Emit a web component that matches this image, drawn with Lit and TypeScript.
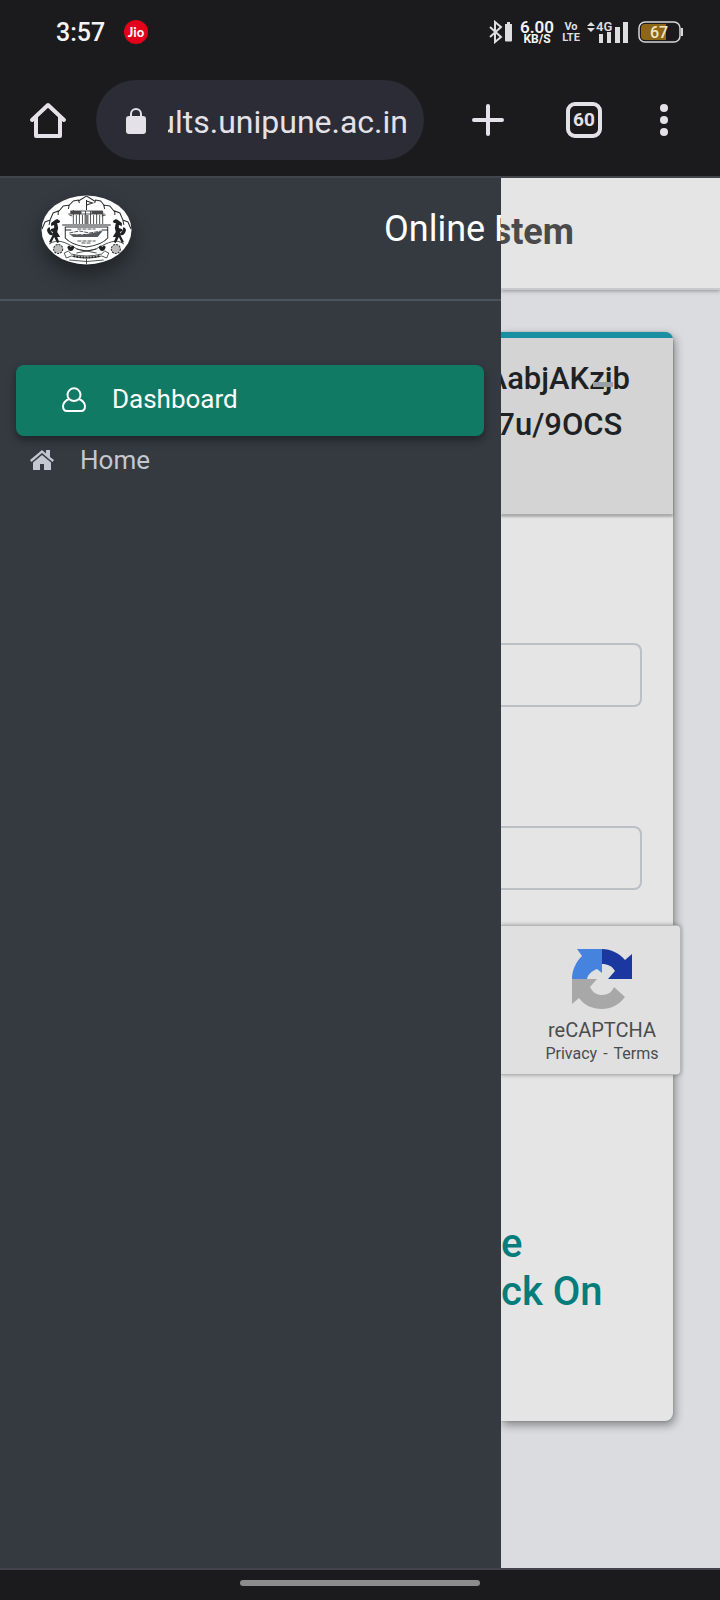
import { LitElement, html, css, svg } from "lit";
import { customElement } from "lit/decorators.js";

@customElement("status-bar")
class StatusBar extends LitElement {
  static styles = css`
    :host { display: flex; align-items: center; height: 64px; padding: 0 36px 0 56px; color: #f4f4f6; font-family: Roboto, sans-serif; }
    .time { font: 500 25px/32px Roboto, sans-serif; width: 68px; padding-top: 2px; white-space: nowrap; }
    .jio { width: 24px; height: 24px; border-radius: 50%; background: #e2001a; font: 900 13px/24px Lato, sans-serif; text-align: center; }
    .right { margin-left: auto; display: flex; align-items: center; height: 32px; }
    .bt { width: 24px; height: 24px; }
    .speed { display: grid; width: 34px; margin-left: 7px; text-align: center; font: 700 12px/11px Roboto, sans-serif; justify-content: center; }
    .speed .num { font: 600 17px/14px Roboto, sans-serif; }
    .volte { display: grid; width: 16px; margin-left: 9px; text-align: center; justify-content: center; font: 700 11px/11px Roboto, sans-serif; color: #dedee0; }
    .signal { width: 42px; height: 24px; margin-left: 8px; }
    .battery { width: 46px; height: 22px; margin-left: 9px; }
    svg text { font-family: Roboto, sans-serif; }
  `;
  render() {
    return html`
      <span class="time">3:57</span><span class="jio">Jio</span>
      <div class="right">
        <svg class="bt" viewBox="0 0 24 24"><path d="M1 7l11 10-6 5V2l6 5L1 17" fill="none" stroke="#dedee0" stroke-width="2"/><path d="M18 2h3v2h2v16.500q0 1-1 1h-5q-1 0-1-1V4h2z" fill="#dedee0"/></svg>
        <span class="speed"><span class="num">6.00</span><span>KB/S</span></span>
        <span class="volte"><span>Vo</span><span>LTE</span></span>
        <svg class="signal" viewBox="0 0 42 24">
          <path d="M0 6l4-4 4 4zM0 8l4 4 4-4z" fill="#dedee0"/>
          <path d="M12 14h4v9h-4zM20 12h4v11h-4zM28 7h5v16h-5zM36 2h5v21h-5z" fill="#dedee0"/>
          <text x="9" y="11" font-size="13" font-weight="600" fill="#dedee0" stroke="#1b1b1d" stroke-width="2" paint-order="stroke">4G</text>
        </svg>
        <svg class="battery" viewBox="0 0 46 22">
          <rect x="1" y="1" width="41" height="20" rx="6" fill="none" stroke="#d6d6d8" stroke-width="1.500"/>
          <path d="M7 3h21v16H7q-4 0-4-4V7q0-4 4-4z" fill="#8d6715"/>
          <path d="M44 7v8" stroke="#d6d6d8" stroke-width="2"/>
          <text x="21" y="17" font-size="16" font-weight="500" fill="#f1e5c8" text-anchor="middle">67</text>
        </svg>
      </div>`;
  }
}

@customElement("browser-bar")
class BrowserBar extends LitElement {
  static styles = css`
    :host { display: flex; align-items: center; padding: 16px 44px 16px 28px; color: #e4e2e8; font-family: Roboto, sans-serif; }
    button { border: 0; background: none; padding: 0; color: inherit; display: grid; place-items: center; flex: none; height: 40px; }
    .home { width: 40px; }
    .home svg { width: 40px; height: 40px; }
    .pill { flex: 1; min-width: 0; height: 80px; margin: 0 44px 0 28px; padding: 2px 16px 0 30px; border-radius: 40px; background: #2b2c35; display: flex; align-items: center; box-sizing: border-box; }
    .lock { width: 20px; height: 28px; flex: none; margin-right: 22px; }
    .url { flex: 1; min-width: 0; border: 0; padding: 2px 0 0; background: none; color: inherit; font: 400 32px/40px Roboto, sans-serif; direction: rtl; outline: 0; }
    .plus { width: 40px; }
    .tabs { width: 36px; height: 36px; border: 4px solid; border-radius: 9px; box-sizing: border-box; font: 700 19px/20px Roboto, sans-serif; margin-left: 58px; }
    .menu { width: 24px; margin-left: 50px; }
  `;
  render() {
    return html`
      <button class="home" aria-label="Home"><svg viewBox="0 0 40 40"><path d="M4 20L20 5l16 15M8 17v19h24V17" fill="none" stroke="currentColor" stroke-width="4" stroke-linejoin="round" stroke-linecap="round"/></svg></button>
      <div class="pill">
        <svg class="lock" viewBox="0 0 20 28"><path d="M5 11V7a5 5 0 0 1 10 0v4" fill="none" stroke="#e4e2e8" stroke-width="2"/><rect y="9" width="20" height="18" rx="3" fill="#e4e2e8"/></svg>
        <input class="url" aria-label="Address" value="results.unipune.ac.in">
      </div>
      <button class="plus" aria-label="New tab"><svg width="32" height="32" viewBox="0 0 32 32"><path d="M16 2v28M2 16h28" stroke="currentColor" stroke-width="4" stroke-linecap="round"/></svg></button>
      <button class="tabs" aria-label="Open tabs">60</button>
      <button class="menu" aria-label="Menu"><svg width="8" height="32" viewBox="0 0 8 32"><g fill="currentColor"><circle cx="4" cy="4" r="4"/><circle cx="4" cy="16" r="4"/><circle cx="4" cy="28" r="4"/></g></svg></button>`;
  }
}

const horse = svg`<path d="M14 25l2-1 3 2-1 2-2 0 1 5-1 4 3 5-3 0 2 5-2 1-3-6-3 6-2-1 3-6 1-4-3-1 1-2 3-1 0-3-3 1 0-3zM12 38q-3-1-3-4t-2-1q-2 2 0 5t4 2z" fill="#1e2022" stroke="none"/>`;

@customElement("side-drawer")
class SideDrawer extends LitElement {
  static styles = css`
    :host { display: block; background: #343a40; color: #fff; font-family: Roboto, sans-serif; overflow: hidden; }
    .brand { display: flex; align-items: flex-start; border-bottom: 2px solid #4b545c; padding: 17px 0 0 41px; box-sizing: border-box; height: 123px; }
    .logo { width: 91px; height: 70px; flex: none; margin-right: 252px; filter: drop-shadow(0 10px 10px rgba(0, 0, 0, 0.400)); }
    .name { font-size: 36px; line-height: 44px; margin-top: 12px; white-space: nowrap; }
    nav { padding: 64px 17px 0 16px; display: flex; flex-direction: column; }
    a { display: flex; align-items: center; color: #c2c7d0; text-decoration: none; font-size: 26px; line-height: 32px; gap: 25px; }
    a svg { width: 26px; height: 28px; }
    .dash { background: #117a65; color: #fff; height: 71px; border-radius: 8px; padding: 0 0 4px 45px; box-shadow: 0 4px 8px rgba(0, 0, 0, 0.400); box-sizing: border-box; }
    .homelink { padding: 8px 0 0 13px; }
  `;
  render() {
    return html`
      <div class="brand">
        <svg class="logo" viewBox="0 0 90 70" preserveAspectRatio="none" role="img" aria-label="University crest">
          <defs><clipPath id="oval"><ellipse cx="45" cy="35" rx="44.500" ry="34.500"/></clipPath></defs>
          <g clip-path="url(#oval)" fill="none" stroke="#282a2c" stroke-width="1">
            <path d="M0 0h90v70H0z" fill="#fff" stroke="none"/>
            <path d="M1 34l3-7 5-2-1 5M9 25l3-7 5-2 0 4M17 17l5-6 6-1-1 4M27 11l5-5 5-1 1 3M37 6l8-5 8 5M53 8l1-3 5 1 4 5M63 14l-1-4 6 1 5 6M73 20v-4l5 2 3 7M82 30l-1-5 5 2 3 7"/>
            <path d="M45 5v10M45 6l6 2-6 2"/>
            <path d="M29 16h32M27 19h36M32 15v14M35 20v9M38 16v13M41 20v9M44 16v13M49 16v13M52 20v9M55 16v13M58 20v9M61 16v13M28 20l3 1M60 21l4-1" stroke-width="0.800"/>
            <path d="M29 16h11v3H29zM50 16h11v3H50z" fill="#44484a" stroke="none"/>
            <path d="M21 30h48M24 32h42v11c-5 6-14 8-21 9-7-1-16-3-21-9zM24 35h6M60 35h6"/>
            <path d="M28 38l10-2 10 2 12-2M31 40l25-1M36 34h18M36 46h18M40 48h10" stroke-width="0.800" stroke-dasharray="4 1"/>
            <path d="M28 39l13 1 20-4-5 6H32z" fill="#55595b" stroke="none"/>
            <path d="M43 20h4v9h-4z" fill="#777" stroke="none"/>
            <path d="M8 49c9-6 17-1 24 3 8 5 18 5 26 0 8-4 16-9 24-3M35 54l20 4M55 54l-20 4" stroke-width="0.800"/>
            <circle cx="17" cy="54" r="4.500" fill="#bbb" stroke-dasharray="2 1"/><circle cx="74" cy="54" r="4.500" fill="#bbb" stroke-dasharray="2 1"/>
            <path d="M26 52q2-3 3.500 0 2-3 3.500 0-1 4-3.500 4t-3.500-4zM57 52q2-3 3.500 0 2-3 3.500 0-1 4-3.500 4t-3.500-4z" fill="#1e2022" stroke="none"/>
            <path d="M23 58l4-2 3 3q15 4 30 0l3-3 4 2-2 5-5-2q-15 4-30 0l-5 2zM45 64v6M28 65q17 3 34 0" stroke-width="0.800"/>
            <path d="M32 61q13 3 26 0" stroke-width="2" stroke-dasharray="2 1"/>
            ${horse}<g transform="translate(90 0) scale(-1 1)">${horse}</g>
          </g>
        </svg>
        <span class="name">Online R</span>
      </div>
      <nav>
        <a class="dash" href="#dashboard"><svg viewBox="0 0 26 28" fill="none" stroke="currentColor" stroke-width="2"><path d="M8 14a6.500 6.500 0 1 1 10 0c3 1 6 4 6 7 0 4-2 5-4 5H6c-2 0-4-1-4-5 0-3 3-6 6-7zM8 14q5 4 10 0"/></svg>Dashboard</a>
        <a class="homelink" href="#home"><svg viewBox="0 0 26 28" fill="currentColor"><path d="M1 14L13 4l4 3.500V4h4v7l4 3-1.500 2L13 7 2.500 16z"/><path d="M4 16.500l9-7.500 9 7.500V24h-7v-6h-4v6H4z"/></svg>Home</a>
      </nav>`;
  }
}

@customElement("result-page")
class ResultPage extends LitElement {
  static styles = css`
    :host { display: block; overflow: hidden; background: #dbdce0; color: #1f2225; font-family: Roboto, sans-serif; }
    .top { display: flex; justify-content: flex-end; height: 110px; padding: 32px 146px 0 0; box-sizing: border-box; background: #e5e5e5; box-shadow: 0 2px 0 #c8c9cc, 0 3px 4px rgba(0, 0, 0, 0.350); }
    h1 { margin: 0; font: 700 36px/44px Roboto, sans-serif; color: #4a4a4a; }
    .card { margin: 44px 47px 0 0; min-height: 1089px; box-sizing: border-box; border-top: 6px solid #1890a2; border-radius: 0 8px 8px 0; background: #e5e5e5; box-shadow: 0 0 2px rgba(0, 0, 0, 0.200), 2px 4px 10px rgba(0, 0, 0, 0.400); }
    .head { position: relative; height: 176px; padding: 18px 43px 0 0; box-sizing: border-box; background: #d4d4d4; box-shadow: 0 3px 2px rgba(0, 0, 0, 0.250); display: flex; flex-direction: column; align-items: flex-end; font-weight: 500; font-size: 31px; line-height: 46px; white-space: pre; }
    .fold { position: absolute; right: 60px; top: 44px; width: 20px; height: 5px; border: 0; padding: 0; background: #9aa0a8; }
    .fields { display: grid; gap: 119px; padding: 129px 31px 0 0; }
    input { width: 100%; height: 64px; box-sizing: border-box; border: 2px solid #bbbfc6; border-left: 0; border-radius: 0 8px 8px 0; background: transparent; padding: 0 20px; font: 400 28px/32px Roboto, sans-serif; outline: 0; }
    .captcha { position: relative; margin: 35px -8px 0 0; height: 150px; box-sizing: border-box; border: 1px solid #b7b7b9; border-left: 0; border-radius: 0 4px 4px 0; background: #e0e0e0; box-shadow: 0 0 4px rgba(0, 0, 0, 0.350); display: flex; flex-direction: column; align-items: center; padding: 22px 0 0 23px; color: #4c4c4c; }
    .captcha svg { width: 62px; height: 62px; }
    .label { font-size: 20px; line-height: 28px; margin-top: 6px; }
    .links { font-size: 16px; line-height: 20px; display: flex; gap: 6px; }
    .links a { color: inherit; text-decoration: none; }
    h2 { margin: 145px 0 0; font: 500 40px/48px Roboto, sans-serif; color: #047d7c; }
    h2 span { display: block; }
  `;
  render() {
    return html`
      <header class="top"><h1>stem</h1></header>
      <section class="card">
        <div class="head"><span>AabjAKzjb</span><span>7u/9OCS </span><button class="fold" aria-label="Collapse"></button></div>
        <div class="fields"><input type="text" aria-label="Seat number"><input type="text" aria-label="Mother name"></div>
        <div class="captcha">
          <svg viewBox="0 0 62 62">
            <path d="M1 31C1 22 5 14 11 8L6 1h25v24l-5-4c-5 2-9 5-10 10z" fill="#4583df"/>
            <path d="M31 1c9 0 17 4 23 11l7-6v25H37l7-8c-3-5-7-7-13-7z" fill="#1b38a0"/>
            <path d="M1 31h25l-7 8c3 6 7 8 12 8 6 0 10-3 12-8l11 10c-6 8-14 12-23 12-10 0-18-4-23-11l-7 6z" fill="#a8a8a8"/>
          </svg>
          <span class="label">reCAPTCHA</span>
          <span class="links"><a href="#privacy">Privacy</a><span>-</span><a href="#terms">Terms</a></span>
        </div>
        <h2><span>e</span><span>ck On</span></h2>
      </section>`;
  }
}

@customElement("app-root")
class AppRoot extends LitElement {
  static styles = css`
    :host { display: flex; flex-direction: column; min-height: 100vh; background: #1b1b1d; }
    .page { flex: 1; display: grid; grid-template-columns: 501px minmax(0, 1fr); border-top: 2px solid #42454c; border-bottom: 2px solid #42424c; }
    .gesture { height: 30px; display: flex; align-items: flex-start; justify-content: center; }
    .gesture span { width: 240px; height: 6px; margin-top: 10px; border-radius: 3px; background: #8c8c8c; }
  `;
  render() {
    return html`
      <status-bar></status-bar>
      <browser-bar></browser-bar>
      <div class="page"><side-drawer></side-drawer><result-page></result-page></div>
      <div class="gesture"><span></span></div>`;
  }
}
